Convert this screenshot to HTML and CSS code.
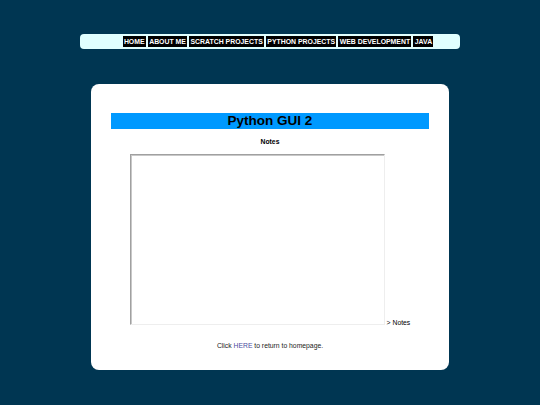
FILE: index.html
```html
<!DOCTYPE html>
<html>
<head>
<meta charset="utf-8">
<title>Python GUI 2</title>
<link rel="stylesheet" href="styles.css">
</head>
<body>
<nav class="nav">
  <a class="nav-link" href="#">HOME</a>
  <a class="nav-link" href="#">ABOUT ME</a>
  <a class="nav-link" href="#">SCRATCH PROJECTS</a>
  <a class="nav-link" href="#">PYTHON PROJECTS</a>
  <a class="nav-link" href="#">WEB DEVELOPMENT</a>
  <a class="nav-link" href="#">JAVA</a>
</nav>
<main class="card">
  <h1 class="title">Python GUI 2</h1>
  <h2 class="subtitle">Notes</h2>
  <p class="frame-row"><span class="frame"></span> &gt; Notes</p>
  <p class="back">Click <a class="back-link" href="#">HERE</a> to return to homepage.</p>
</main>
</body>
</html>
```

FILE: styles.css
```css
html, body {
  margin: 0;
  padding: 0;
}
body {
  background: #003652;
  font-family: "Liberation Sans", Arial, sans-serif;
  height: 405px;
  overflow: hidden;
}
.nav {
  width: 364px;
  height: 15px;
  margin: 34px 0 0 80px;
  padding-left: 16px;
  background: #e0ffff;
  border-radius: 4px;
  display: flex;
  justify-content: center;
  align-items: center;
  gap: 2px;
}
.nav-link {
  background: #000;
  color: #fff;
  font-weight: bold;
  font-size: 6.9px;
  line-height: 11px;
  padding: 0 1.3px;
  text-decoration: none;
}
.card {
  width: 318px;
  height: 257px;
  margin: 35px 0 0 91px;
  padding: 29px 20px 0 20px;
  background: #fff;
  border-radius: 8px;
  display: flex;
  flex-direction: column;
}
.title {
  margin: 0;
  background: #0099ff;
  color: #000;
  font-size: 13.5px;
  line-height: 16px;
  text-align: center;
  font-weight: bold;
}
.subtitle {
  margin: 8px 0 0 0;
  font-size: 6.8px;
  line-height: 10px;
  text-align: center;
  font-weight: bold;
}
.frame-row {
  margin: 7px 0 0 0;
  font-size: 6.8px;
  line-height: 9px;
  text-align: center;
  color: #000;
}
.frame {
  display: inline-block;
  vertical-align: baseline;
  width: 253px;
  height: 169px;
  border-style: solid;
  border-width: 1px;
  border-color: #a0a0a0 #eeeeee #eeeeee #a0a0a0;
  box-shadow: inset 1px 1px 0 #c8c8c8;
}
.back {
  margin: 14px 0 0 0;
  font-size: 6.8px;
  line-height: 10px;
  text-align: center;
  color: #222;
}
.back-link {
  color: #4a4aa0;
  text-decoration: none;
}
```
